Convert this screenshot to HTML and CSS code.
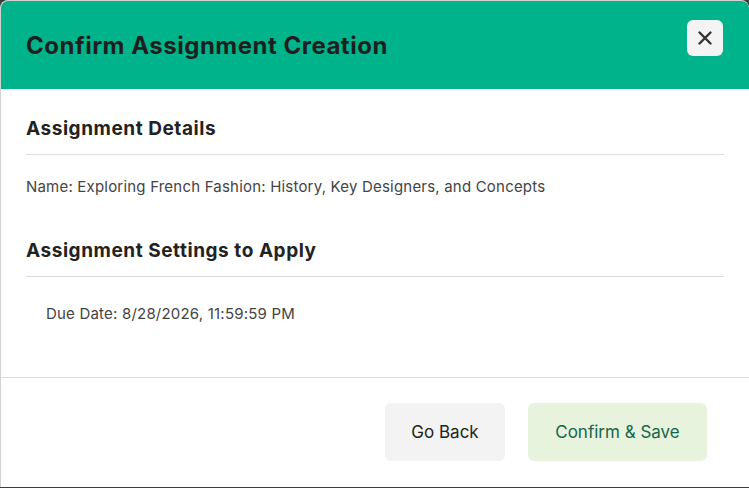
FILE: index.html
```html
<!DOCTYPE html>
<html lang="en">
<head>
<meta charset="utf-8">
<title>Confirm Assignment Creation</title>
<link rel="stylesheet" href="styles.css">
</head>
<body>
<div class="modal">
  <header class="modal-header">
    <h1 class="modal-title">Confirm Assignment Creation</h1>
    <button class="close-btn" aria-label="Close">
      <svg width="16" height="16" viewBox="0 0 16 16" fill="none" stroke="#333" stroke-width="2.4" stroke-linecap="round">
        <path d="M2.5 2.5 L13.5 13.5 M13.5 2.5 L2.5 13.5"/>
      </svg>
    </button>
  </header>
  <main class="modal-body">
    <section class="section">
      <h2 class="section-title">Assignment Details</h2>
      <p class="detail">Name: Exploring French Fashion: History, Key Designers, and Concepts</p>
    </section>
    <section class="section">
      <h2 class="section-title">Assignment Settings to Apply</h2>
      <p class="detail indented">Due Date: 8/28/2026, 11:59:59 PM</p>
    </section>
  </main>
  <footer class="modal-footer">
    <button class="btn btn-secondary">Go Back</button>
    <button class="btn btn-primary">Confirm &amp; Save</button>
  </footer>
</div>
</body>
</html>
```
FILE: styles.css
```css
* { box-sizing: border-box; }

html, body {
  margin: 0;
  padding: 0;
  height: 100%;
  background: #3d3d3d;
  font-family: Inter, "Noto Sans", sans-serif;
}

.modal {
  width: 749px;
  height: 487px;
  background: #fff;
  border: 1px solid #d2d2d2;
  border-right: none;
  border-bottom: none;
  border-radius: 8px 8px 0 0;
  overflow: hidden;
  display: flex;
  flex-direction: column;
}

.modal-header {
  background: #00b38b;
  height: 88px;
  flex: none;
  display: flex;
  align-items: center;
  justify-content: space-between;
  padding: 0 26px 0 25px;
}

.modal-title {
  margin: 0;
  font-size: 24px;
  font-weight: 700;
  color: #1e1e1e;
  letter-spacing: 0.5px;
}

.close-btn {
  width: 36px;
  height: 36px;
  border: none;
  border-radius: 6px;
  background: #f4f4f4;
  display: flex;
  align-items: center;
  justify-content: center;
  padding: 0;
  margin-top: -14px;
  cursor: pointer;
}

.modal-body {
  flex: 1;
  padding: 27px 25px 0 25px;
  border-bottom: 1px solid #dedede;
}

.section-title {
  margin: 0;
  font-size: 19px;
  font-weight: 700;
  color: #222;
  padding-bottom: 12px;
  border-bottom: 1px solid #dcdcdc;
  line-height: 26px;
  letter-spacing: 0.55px;
}

.detail {
  margin: 0;
  font-size: 15px;
  color: #444;
  line-height: 20px;
  padding: 22px 0 0 0;
  letter-spacing: 0.2px;
}

.section + .section {
  margin-top: 41px;
}

.indented {
  padding-left: 20px;
  padding-top: 27px;
}

.modal-footer {
  flex: none;
  height: 109px;
  display: flex;
  justify-content: flex-end;
  align-items: flex-start;
  gap: 23px;
  padding: 25px 42px 0 0;
}

.btn {
  height: 58px;
  border: none;
  border-radius: 6px;
  font-family: inherit;
  font-size: 17px;
  padding: 0;
  cursor: pointer;
}

.btn-secondary {
  background: #f3f3f3;
  color: #222;
  width: 120px;
}

.btn-primary {
  background: #e7f3dc;
  color: #17654a;
  width: 179px;
}
```
